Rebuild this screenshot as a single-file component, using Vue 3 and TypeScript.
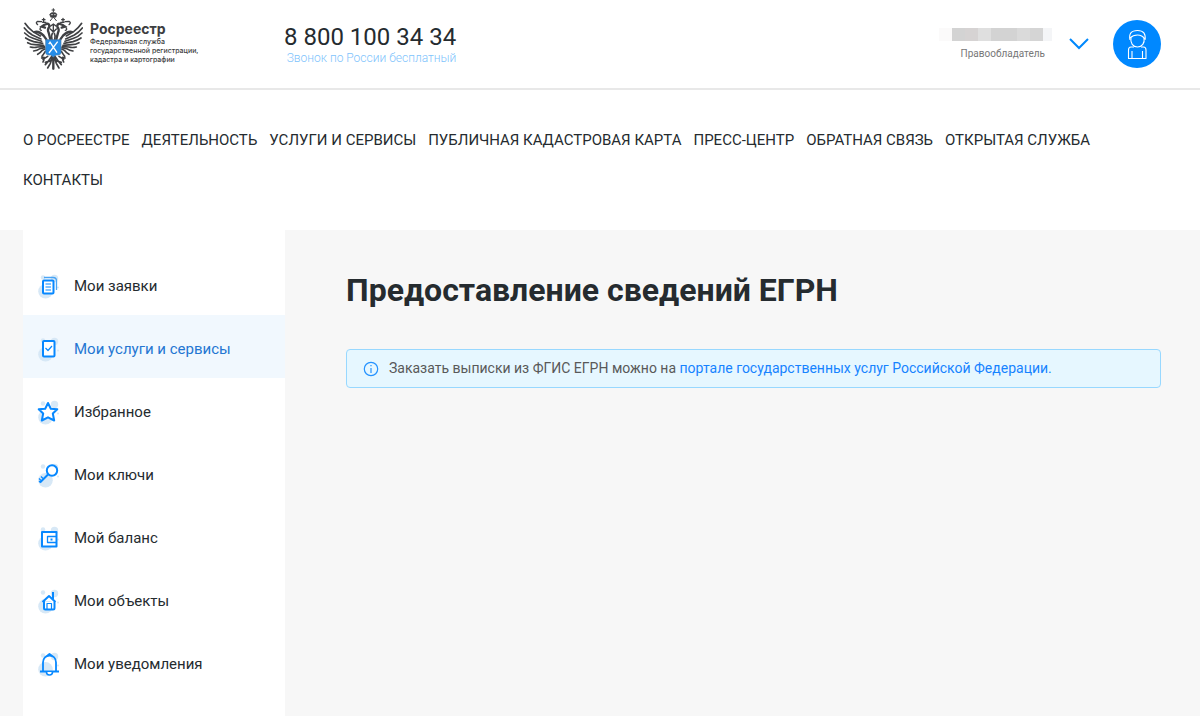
<script setup lang="ts">
type IconName = 'orders' | 'services' | 'star' | 'key' | 'wallet' | 'house' | 'bell'

interface MenuItem {
  title: string
  icon: IconName
  active?: boolean
}

const navigation: string[] = [
  'О Росреестре',
  'Деятельность',
  'Услуги и сервисы',
  'Публичная кадастровая карта',
  'Пресс-центр',
  'Обратная связь',
  'Открытая служба',
  'Контакты',
]

const menu: MenuItem[] = [
  { title: 'Мои заявки', icon: 'orders' },
  { title: 'Мои услуги и сервисы', icon: 'services', active: true },
  { title: 'Избранное', icon: 'star' },
  { title: 'Мои ключи', icon: 'key' },
  { title: 'Мой баланс', icon: 'wallet' },
  { title: 'Мои объекты', icon: 'house' },
  { title: 'Мои уведомления', icon: 'bell' },
]

const maskColors: string[] = ['#fbfafa', '#d3d3d3', '#d6d3d3', '#dfdfdf', '#d3d3d3', '#d3d3d3', '#dadada', '#d5d5d5', '#f4f5f7']
</script>

<template>
  <div class="page">
    <header class="header">
      <a class="logo" href="#">
        <svg class="emblem" viewBox="24 24 180 192" aria-hidden="true">
          <g fill="none" stroke="#3f4043" stroke-linecap="round">
            <g v-for="side in [1, -1]" :key="side" :transform="side === 1 ? '' : 'translate(230 0) scale(-1 1)'">
              <g stroke-width="5">
                <path d="M30 70Q40 85 54 95L76 108" />
                <path d="M28 84Q38 97 52 105L78 117" />
                <path d="M29 99Q40 110 54 115L80 124" />
                <path d="M32 114Q44 122 56 125L83 130" />
                <path d="M38 128Q48 134 60 134L86 136" />
                <path d="M46 141Q58 144 68 141L88 140" />
                <path d="M56 153Q66 152 75 146L89 143" />
                <path d="M68 163Q76 159 82 151L90 147" />
                <path d="M81 169Q86 162 91 154" />
              </g>
              <path d="M58 96Q72 92 86 107L94 118" stroke-width="7" />
              <path d="M106 118L101 98Q96 88 103 80Q104 73 97 71L87 75L80 80L90 83" stroke-width="7" />
              <path d="M77 83Q72 89 79 91M68 74Q60 68 68 64L80 65" stroke-width="4" />
              <path d="M86 64V55M82 59H90M83 67H93" stroke-width="4" />
              <path d="M112 100Q107 109 111 119M98 169L84 178M87 172L80 174M87 179L84 186" stroke-width="5" />
              <path d="M111 168L100 184L91 194M112 172L106 190L98 204M114 172V207M108 182L91 187" stroke-width="5" />
              <path d="M114 52L106 62" stroke-width="3" />
            </g>
            <path d="M115 26V36M111 30H119" stroke-width="3" />
            <path d="M107 51L104 43Q108 37 115 38Q122 37 126 43L123 51Z" fill="#3f4043" stroke-width="2" />
            <path d="M109 44H113M118 44H121" stroke="#fff" stroke-width="2" />
            <path d="M107 78L115 72L123 78M115 74V92M106 87L115 96L124 87" stroke-width="4" />
          </g>
          <path d="M92 119H138V158Q138 164 130 165H123L115 171L107 165H100Q92 164 92 158Z" fill="#248ce8" stroke="#4b78a3" stroke-width="2" />
          <path d="M104 125L126 158M128 125L102 159M101 132L107 126" fill="none" stroke="#fff" stroke-width="4" />
        </svg>
        <span class="brand">
          <strong>Росреестр</strong>
          <small>Федеральная служба<br>государственной регистрации,<br>кадастра и картографии</small>
        </span>
      </a>
      <div class="phone">
        <a href="tel:88001003434">8 800 100 34 34</a>
        <span>Звонок по России бесплатный</span>
      </div>
      <div class="profile">
        <div class="owner">
          <div class="mask"><i v-for="(color, index) in maskColors" :key="index" :style="{ background: color }" /></div>
          <span>Правообладатель</span>
        </div>
        <button class="expand" type="button" aria-label="Открыть меню профиля">
          <svg viewBox="0 0 20 12"><path d="M1 1L10 10L19 1" fill="none" stroke="#0088fc" stroke-width="2" /></svg>
        </button>
        <button class="avatar" type="button" aria-label="Профиль">
          <svg viewBox="0 0 48 48" fill="none" stroke="#fff" stroke-width="1.1" stroke-linejoin="round">
            <path d="M17 20Q15 10.500 24.500 10.500Q33.500 10.500 32 20" />
            <path d="M18 17.500C17 23 20 27 24.500 27C29 27 32 23 31 18" />
            <path d="M17 18Q20 15 24.500 15Q29 15 32 19" />
            <path d="M21 27H18Q15.500 27 15.500 30V38.500H33V30Q33 27 30.500 27H28M19 31V38M29.500 31V38" />
          </svg>
        </button>
      </div>
    </header>

    <nav class="navigation" aria-label="Основное меню">
      <a v-for="item in navigation" :key="item" href="#">{{ item }}</a>
    </nav>

    <div class="workspace">
      <aside class="sidebar">
        <a v-for="item in menu" :key="item.icon" class="menu-item" :class="{ active: item.active }" href="#" :aria-current="item.active ? 'page' : undefined">
          <svg class="menu-icon" viewBox="0 0 24 26" aria-hidden="true">
            <g fill="#d7e8f6">
              <circle cx="8.5" cy="18.3" r="7.3" />
              <circle cx="17.5" cy="5.5" r="3.7" />
              <circle cx="6" cy="4.5" r="2.2" />
              <circle cx="21" cy="14.5" r="1" />
            </g>
            <g fill="none" stroke="#0788ff" stroke-width="2" stroke-linejoin="round">
              <template v-if="item.icon === 'orders'">
                <path d="M7 4.500H16Q19.500 4.500 19.500 8V17" stroke-width="1.3" stroke="#4aa5f5" />
                <rect x="6" y="7.500" width="10.500" height="13" rx="1" fill="#fff" />
                <path d="M8.500 11H14M8.500 14H14M8.500 17H14" stroke-width="1" />
              </template>
              <template v-else-if="item.icon === 'services'">
                <rect x="6" y="5" width="11.500" height="15.500" rx="1" fill="#fff" />
                <path d="M8.500 12L11 14.500L15 10" stroke-width="1.2" />
              </template>
              <path v-else-if="item.icon === 'star'" d="M11 4L13.800 9.800L20.300 10.200L15.800 14.500L17.200 21.500L11 18.300L4.800 21.500L6.200 14.500L1.700 10.200L8.200 9.800Z" fill="#fff" />
              <template v-else-if="item.icon === 'key'">
                <circle cx="15" cy="8.5" r="5.2" fill="#fff" />
                <path d="M11 12.500L3 20.500" />
                <path d="M2 16.500L4 18.500M4 14.500L6 16.500M2 19L3.500 20.500" stroke-width="1.2" />
              </template>
              <template v-else-if="item.icon === 'wallet'">
                <rect x="5" y="7" width="14.500" height="14.500" fill="#fff" />
                <path d="M19.500 11.500H10.500V17.500H19.500" stroke-width="1.3" />
                <path d="M13.500 14.500H15.500" />
              </template>
              <template v-else-if="item.icon === 'house'">
                <path d="M5.500 14L12 8L18.500 14M7 13V20Q7 21.500 8.500 21.500H16Q17.500 21.500 17.500 20V13M16 11V4" fill="#fff" />
                <path d="M10 21V15.500H14.500V21" stroke-width="1.2" />
              </template>
              <template v-else>
                <path d="M6 20V11.500C6 7 9 4.500 12.500 4.500C16 4.500 19 7 19 11.500V20M10.500 4.500L12.500 3L14.500 4.500" stroke-width="1.8" />
                <path d="M3 20.500H22" />
                <path d="M9.500 21Q9.500 24 12.500 24Q15.500 24 15.500 21" fill="#fff" stroke-width="1.6" />
              </template>
            </g>
          </svg>
          <span>{{ item.title }}</span>
        </a>
      </aside>
      <main class="content">
        <h1>Предоставление сведений ЕГРН</h1>
        <div class="notice" role="note">
          <svg viewBox="0 0 16 16" aria-hidden="true">
            <circle cx="8" cy="8" r="6.7" fill="none" stroke="#2492ff" stroke-width="1.2" />
            <path d="M8 7V12M8 4V5.200" stroke="#2492ff" stroke-width="1.2" />
          </svg>
          <p>Заказать выписки из ФГИС ЕГРН можно на <a href="#">портале государственных услуг Российской Федерации.</a></p>
        </div>
      </main>
    </div>
  </div>
</template>

<style>
body {
  margin: 0;
  background: #fff;
}
</style>

<style scoped>
.page {
  display: flex;
  flex-direction: column;
  min-height: 100vh;
  color: #252b2f;
  font-family: Roboto, 'Liberation Sans', sans-serif;
}

a {
  color: inherit;
  text-decoration: none;
}

button {
  padding: 0;
  border: 0;
  background: none;
  cursor: pointer;
}

svg {
  display: block;
  flex: none;
}

.header {
  display: flex;
  flex: none;
  align-items: center;
  height: 88px;
  padding: 0 39px 0 23px;
  border-bottom: 2px solid #e8e8e8;
}

.logo {
  display: flex;
  flex: none;
  gap: 7px;
  width: 261px;
  padding-bottom: 8px;
}

.emblem {
  width: 60px;
  height: 64px;
}

.brand {
  padding-top: 12px;
  color: #3d3e41;
  font-family: Inter, sans-serif;
}

.brand strong,
.brand small {
  display: block;
}

.brand strong {
  font-size: 14px;
  line-height: 17px;
}

.brand small {
  font-size: 7px;
  font-weight: 500;
  line-height: 9px;
  white-space: nowrap;
}

.phone {
  display: flex;
  flex-direction: column;
  align-items: flex-end;
}

.phone a {
  font-size: 24px;
  line-height: 28px;
}

.phone span {
  color: #80c3fc;
  font-size: 12px;
  font-weight: 300;
  line-height: 14px;
}

.profile {
  display: flex;
  align-items: center;
  margin-left: auto;
}

.owner {
  display: flex;
  flex-direction: column;
  align-items: flex-end;
  gap: 6px;
}

.owner span {
  padding-right: 7px;
  color: #777;
  font-size: 10px;
  line-height: 14px;
}

.mask {
  display: flex;
}

.mask i {
  width: 13px;
  height: 13px;
}

.mask i:last-child {
  width: 9px;
}

.expand {
  margin: 0 24px 0 17px;
}

.expand svg {
  width: 20px;
  height: 12px;
}

.avatar {
  overflow: hidden;
  border-radius: 50%;
  background: #0088ff;
}

.avatar svg {
  width: 48px;
  height: 48px;
}

.navigation {
  display: flex;
  flex: none;
  flex-wrap: wrap;
  gap: 0 12px;
  padding: 30px 80px 30px 23px;
}

.navigation a {
  font-size: 15px;
  line-height: 40px;
  text-transform: uppercase;
}

.workspace {
  display: flex;
  flex: 1;
  padding: 0 39px 0 23px;
  background: #f7f7f7;
}

.sidebar {
  flex: 0 0 262px;
  padding-top: 22px;
  background: #fff;
}

.menu-item {
  display: flex;
  box-sizing: border-box;
  align-items: center;
  gap: 13px;
  height: 63px;
  padding: 4px 14px 0;
  font-size: 15px;
}

.menu-item.active {
  background: #f1f8fe;
  color: #2476d2;
}

.menu-icon {
  width: 24px;
  height: 26px;
}

.content {
  flex: 1;
  min-width: 0;
  padding: 40px 0 0 61px;
}

h1 {
  margin: 0 0 39px;
  font-size: 32px;
  line-height: 40px;
}

.notice {
  display: flex;
  align-items: center;
  gap: 10px;
  padding: 8px 16px;
  border: 1px solid #98d8ff;
  border-radius: 4px;
  background: #e6f7ff;
}

.notice svg {
  width: 16px;
  height: 16px;
}

.notice p {
  margin: 0;
  color: #595959;
  font-size: 14px;
  line-height: 21px;
}

.notice a {
  color: #1683ff;
}
</style>
